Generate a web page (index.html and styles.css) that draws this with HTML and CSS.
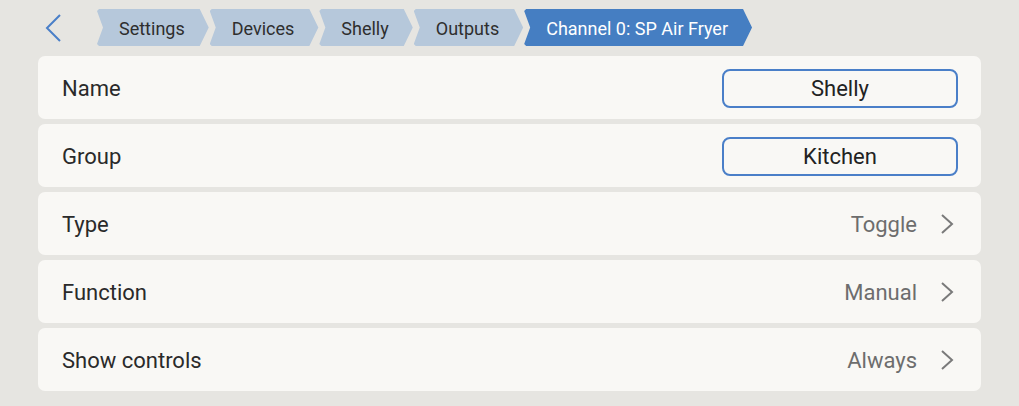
FILE: index.html
```html
<!DOCTYPE html>
<html lang="en">
<head>
  <meta charset="UTF-8" />
  <title>Channel 0: SP Air Fryer</title>
  <meta name="viewport" content="width=device-width, initial-scale=1.0" />
  <link rel="stylesheet" href="styles.css">
</head>
<body>

  <!-- Top bar: back + breadcrumbs -->
  <div class="topbar">
    <button class="back" type="button" aria-label="Back">
      <svg width="17" height="28" viewBox="0 0 17 28">
        <path d="M15 1 L2 14 L15 27" fill="none" stroke="#4a7fc8" stroke-width="2" />
      </svg>
    </button>
    <nav class="crumbs">
      <span class="crumb">Settings</span>
      <span class="crumb">Devices</span>
      <span class="crumb">Shelly</span>
      <span class="crumb">Outputs</span>
      <span class="crumb active">Channel 0: SP Air Fryer</span>
    </nav>
  </div>

  <div class="list">
    <div class="row">
      <span class="label">Name</span>
      <input class="field" type="text" value="Shelly" />
    </div>
    <div class="row">
      <span class="label">Group</span>
      <input class="field" type="text" value="Kitchen" />
    </div>
    <div class="row">
      <span class="label">Type</span>
      <span class="value">Toggle</span>
      <svg class="chev" width="18" height="20" viewBox="0 0 18 20">
        <path d="M2 1 L12 10 L2 19" fill="none" stroke="#7a7a7a" stroke-width="2" />
      </svg>
    </div>
    <div class="row">
      <span class="label">Function</span>
      <span class="value">Manual</span>
      <svg class="chev" width="18" height="20" viewBox="0 0 18 20">
        <path d="M2 1 L12 10 L2 19" fill="none" stroke="#7a7a7a" stroke-width="2" />
      </svg>
    </div>
    <div class="row">
      <span class="label">Show controls</span>
      <span class="value">Always</span>
      <svg class="chev" width="18" height="20" viewBox="0 0 18 20">
        <path d="M2 1 L12 10 L2 19" fill="none" stroke="#7a7a7a" stroke-width="2" />
      </svg>
    </div>
  </div>

</body>
</html>
```

FILE: styles.css
```css
html, body {
  margin: 0;
  padding: 0;
  background: #e6e5e1;
  font-family: Roboto, 'Noto Sans', sans-serif;
}

body {
  padding: 9px 38px 0 38px;
}

.topbar {
  display: flex;
  align-items: center;
  height: 37px;
  margin-bottom: 10px;
}

.back {
  width: 59px;
  height: 37px;
  padding: 0 0 0 7px;
  border: none;
  background: none;
  display: flex;
  align-items: center;
  cursor: pointer;
}

.crumbs {
  display: flex;
  gap: 0;
  height: 37px;
}

.crumb {
  display: flex;
  align-items: center;
  height: 37px;
  padding: 1px 25px 0 22px;
  box-sizing: border-box;
  font-size: 18px;
  color: #2e2e2e;
  background: #b6c8db;
  clip-path: polygon(2px 0, calc(100% - 10px) 0, calc(100% - 1px) 50%, calc(100% - 10px) 100%, 2px 100%, 0 calc(100% - 2px), 6px 50%, 0 2px);
}

.crumb + .crumb {
  margin-left: 0;
}

.crumb.active {
  background: #457ec2;
  color: #fff;
}

.list {
  display: flex;
  flex-direction: column;
  gap: 5px;
}

.row {
  display: flex;
  align-items: center;
  height: 63px;
  padding: 1px 23px 0 24px;
  box-sizing: border-box;
  background: #f9f8f5;
  border-radius: 7px;
}

.label {
  flex: 1;
  font-size: 22px;
  color: #2a2a2a;
}

.value {
  font-size: 22px;
  color: #6d6d6d;
  margin-right: 23px;
}

.chev {
  display: block;
}

.field {
  width: 236px;
  height: 39px;
  box-sizing: border-box;
  border: 2px solid #4a7fc8;
  border-radius: 8px;
  background: transparent;
  text-align: center;
  font-family: Roboto, 'Noto Sans', sans-serif;
  font-size: 22px;
  color: #222;
  outline: none;
  padding: 0;
}
```
